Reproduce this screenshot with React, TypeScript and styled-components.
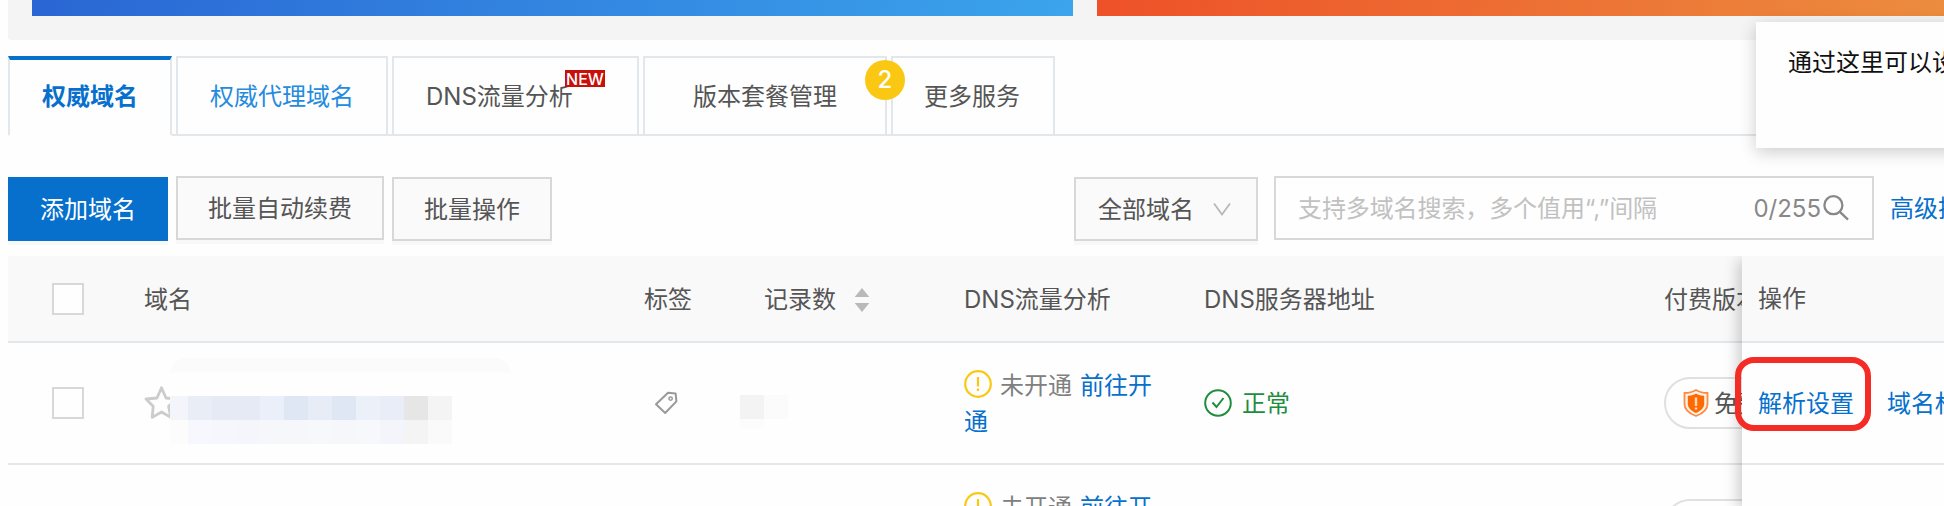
import React from "react";
import styled, { createGlobalStyle, css } from "styled-components";

const line = "#e2e7eb";

const GlobalStyle = createGlobalStyle`
  * { box-sizing: border-box; }
  body {
    margin: 0;
    background: #fefefe;
    overflow: hidden;
    font-family: Inter, "Noto Sans CJK SC", sans-serif;
    font-size: 24px;
    line-height: 36px;
    color: #555;
  }
`;

const Page = styled.main`
  position: relative;
  width: 1944px;
  height: 506px;
  overflow: hidden;
  padding-left: 8px;
`;

const BannerStrip = styled.section`
  display: flex;
  gap: 24px;
  height: 40px;
  padding: 0 0 24px 24px;
  background: #f4f4f4;
  border-bottom-left-radius: 4px;
`;

const Banner = styled.div<{ $from: string; $to: string; $width: number }>`
  flex: 0 0 ${(p) => p.$width}px;
  background: linear-gradient(100deg, ${(p) => p.$from}, ${(p) => p.$to});
`;

const TabBar = styled.nav`
  display: flex;
  gap: 4px;
  height: 80px;
  margin-top: 16px;
  box-shadow: inset 0 -2px 0 ${line};
`;

const Tab = styled.div<{ $width: number; $active?: boolean; $link?: boolean; $indent?: number }>`
  position: relative;
  flex: 0 0 ${(p) => p.$width}px;
  height: 80px;
  padding: 21px 0 0 ${(p) => p.$indent ?? 32}px;
  border: 2px solid ${line};
  white-space: nowrap;
  color: ${(p) => (p.$link ? "#258bdc" : "#555")};
  ${(p) =>
    p.$active &&
    css`
      padding-top: 19px;
      border-top: 4px solid #0670cc;
      border-bottom-color: #fefefe;
      background: #fefefe;
      color: #0670cc;
      font-weight: 600;
    `}
`;

const NewBadge = styled.span`
  position: absolute;
  top: 12px;
  left: 171px;
  width: 40px;
  height: 17px;
  background: #c80f0a;
  color: #fff;
  font-size: 16px;
  font-weight: 500;
  line-height: 18px;
  text-align: center;
`;

const StepBadge = styled.span`
  position: absolute;
  z-index: 2;
  top: 2px;
  right: -20px;
  width: 40px;
  height: 40px;
  border-radius: 50%;
  background: #fac813;
  color: #fff;
  font-weight: 500;
  line-height: 40px;
  text-align: center;
`;

const Toolbar = styled.div`
  display: flex;
  gap: 8px;
  height: 80px;
  margin-top: 40px;
  white-space: nowrap;
`;

const Label = styled.span`
  padding-top: 2px;
`;

const Button = styled.button<{ $width: number; $primary?: boolean; $drop?: number }>`
  display: flex;
  align-items: center;
  justify-content: center;
  flex: 0 0 ${(p) => p.$width}px;
  height: 64px;
  margin: ${(p) => p.$drop ?? 0}px 0 0;
  padding: 0;
  border: 2px solid ${(p) => (p.$primary ? "#0670cc" : "#d8d8d8")};
  background: ${(p) => (p.$primary ? "#0670cc" : "#fafafa")};
  box-shadow: 0 4px 0 rgba(0, 0, 0, 0.025);
  color: ${(p) => (p.$primary ? "#fff" : "#555")};
  font: inherit;
`;

const FilterButton = styled(Button)`
  justify-content: flex-start;
  gap: 19px;
  margin-left: auto;
  padding-left: 22px;
`;

const SearchBox = styled.div`
  display: flex;
  align-items: center;
  flex: 0 0 600px;
  height: 64px;
  margin-left: 8px;
  padding: 0 23px 0 22px;
  border: 2px solid #d8d8d8;
  background: #fefefe;
`;

const Placeholder = styled(Label)`
  flex: 1;
  color: #c1c1c1;
  letter-spacing: -0.1px;
`;

const Counter = styled(Label)`
  margin-right: 2px;
  color: #888;
`;

const Advanced = styled.a`
  flex: 0 0 62px;
  height: 66px;
  padding-left: 8px;
  overflow: hidden;
  line-height: 66px;
  color: #0670cc;
`;

const columns = "136px 500px 120px 200px 240px 460px 1fr";

const Table = styled.section`
  position: relative;
  height: 250px;
  overflow: hidden;
`;

const Row = styled.div<{ $head?: boolean }>`
  display: grid;
  grid-template-columns: ${columns};
  align-items: center;
  height: ${(p) => (p.$head ? 87 : 122)}px;
  border-bottom: 2px solid ${line};
  background: ${(p) => (p.$head ? "#f9f9f9" : "transparent")};
  white-space: nowrap;
`;

const Cell = styled.div`
  display: flex;
  align-items: center;
  min-width: 0;
`;

const HeadCell = styled(Cell)`
  padding-top: 2px;
`;

const Checkbox = styled.span`
  width: 32px;
  height: 32px;
  margin-left: 44px;
  border: 2px solid #d8d8d8;
  background: #fefefe;
`;

const DomainCell = styled(Cell)`
  position: relative;
  height: 120px;
`;

const Masked = styled.div`
  position: absolute;
  left: 26px;
  top: 15px;
  width: 341px;
  height: 86px;
  background: #fefefe;
  border-top: 14px solid #fbfbfb;
  border-radius: 16px 16px 0 0;
  padding-top: 24px;
`;

const MosaicLine = styled.div`
  display: flex;
  height: 24px;
`;

const Block = styled.i<{ $color: string; $width?: number; $height?: number }>`
  flex: 0 0 ${(p) => p.$width ?? 24}px;
  height: ${(p) => p.$height ?? 24}px;
  background: ${(p) => p.$color};
`;

const CountMask = styled.div`
  display: flex;
  height: 34px;
  margin: 17px 0 0 -24px;
`;

const FlowText = styled.div`
  width: 200px;
  padding-top: 2px;
  white-space: normal;
  color: #808080;

  svg { vertical-align: -4px; margin-right: 8px; }
`;

const Link = styled.a`
  color: #0670cc;
`;

const FlowLink = styled(Link)`
  margin-left: 8px;
`;

const Normal = styled(Cell)`
  gap: 10px;
  color: #1e8e3e;
`;

const Plan = styled.div`
  display: flex;
  align-items: center;
  gap: 5px;
  width: 150px;
  height: 52px;
  padding-left: 17px;
  border: 2px solid #e0e0e0;
  border-radius: 26px;
`;

const Fixed = styled.aside`
  position: absolute;
  top: 0;
  right: 0;
  width: 202px;
  height: 250px;
  background: #fefefe;
  box-shadow: -4px 4px 14px rgba(0, 0, 0, 0.2);
`;

const FixedRow = styled.div<{ $head?: boolean }>`
  display: flex;
  align-items: center;
  height: ${(p) => (p.$head ? 87 : 122)}px;
  padding-top: ${(p) => (p.$head ? 1 : 2)}px;
  padding-left: 16px;
  border-bottom: 2px solid ${line};
  background: ${(p) => (p.$head ? "#f9f9f9" : "transparent")};
  white-space: nowrap;
`;

const Divider = styled.i`
  width: 2px;
  height: 20px;
  margin: 0 17px 0 16px;
  background: #e0e0e0;
`;

const Highlight = styled.div`
  position: absolute;
  left: 1735px;
  top: 357px;
  width: 136px;
  height: 74px;
  border: 6px solid #f42c25;
  border-radius: 19px;
`;

const Hint = styled.aside`
  position: absolute;
  left: 1756px;
  top: 22px;
  width: 240px;
  height: 126px;
  padding: 23px 32px;
  background: #fefefe;
  box-shadow: 0 4px 16px rgba(0, 0, 0, 0.2);
  color: #111;
  white-space: nowrap;
`;

const Chevron = () => (
  <svg width="18" height="14" viewBox="0 0 18 14" fill="none" stroke="#b8b8b8" strokeWidth="1.8">
    <path d="M1 1.5 9 12.5 17 1.5" />
  </svg>
);

const SearchIcon = () => (
  <svg width="26" height="26" viewBox="0 0 26 26" fill="none" stroke="#888" strokeWidth="2.3">
    <circle cx="10.4" cy="10.2" r="9" />
    <path d="m16.6 16.6 8.4 8" />
  </svg>
);

const SortSvg = styled.svg`
  margin-left: 18px;
`;

const SortIcon = () => (
  <SortSvg width="16" height="26" viewBox="0 0 16 26" fill="#b9b9b9">
    <path d="M8 1 15.300 10H.7zM8 25 .7 16h14.600z" />
  </SortSvg>
);

const Star = () => (
  <svg width="34" height="34" viewBox="0 0 34 34" fill="none" stroke="#ccc" strokeWidth="2.8" strokeLinejoin="round">
    <path d="M17.500 1.800 22 12l10.400 1-7.800 7.200 2.200 11.200-9.300-5.400-9.300 5.400 1-11.200L2 13l11-1z" />
  </svg>
);

const TagSvg = styled.svg`
  margin-left: 10px;
`;

const TagIcon = () => (
  <TagSvg width="24" height="24" viewBox="0 0 24 24" fill="none" stroke="#999" strokeWidth="2" strokeLinejoin="round">
    <path d="M2 13.200 14 1.800l7.600.6.8 8L11.200 22z" />
    <circle cx="16.600" cy="7.600" r="1.700" strokeWidth="1.500" />
  </TagSvg>
);

const WarnIcon = () => (
  <svg width="28" height="28" viewBox="0 0 28 28" fill="none" stroke="#fac813" strokeWidth="2.2">
    <circle cx="14" cy="14" r="12.8" />
    <path d="M14 7v9.5M14 18.500v2.500" />
  </svg>
);

const OkIcon = () => (
  <svg width="28" height="28" viewBox="0 0 28 28" fill="none" stroke="#1e8e3e" strokeWidth="2">
    <circle cx="14" cy="14" r="12.8" />
    <path d="m8.5 13.500 4 4.500 7-9" />
  </svg>
);

const Shield = () => (
  <svg width="26" height="28" viewBox="0 0 26 28">
    <path d="M13 1C9.5 3.2 5.5 4 1.5 4v11c0 6 5 9.7 11.500 12 6.500-2.300 11.500-6 11.500-12V4C20.500 4 16.500 3.200 13 1z" fill="#fff3ea" stroke="#ff8a45" strokeWidth="1.8" />
    <path d="M13 4.500C10.500 6 8 6.600 4.800 6.800v8c0 4.400 3.500 7.200 8.200 9.200 4.700-2 8.200-4.800 8.200-9.200v-8C18 6.600 15.500 6 13 4.500z" fill="#ff6a00" />
    <path d="M13 8.500v8.500M13 18.500v2" stroke="#ffd9bd" strokeWidth="2.400" />
  </svg>
);

const mosaic = [
  ["#f4f5fa", "#e8edf6", "#e5eaf5", "#e5eaf5", "#ebeff9", "#e0e7f4", "#e8ecf6", "#e0e7f4", "#ecf0f9", "#e9edf8", "#e6e6e6", "#f4f4f4"],
  ["#fcfcfc", "#f6f8fd", "#f5f7fc", "#f4f6fb", "#f5f7fb", "#f5f7fb", "#f6f8fc", "#f5f7fb", "#f6f8fc", "#f3f5fb", "#f4f4f4", "#fafafa"],
];

const DomainRow = ({ masked }: { masked?: boolean }) => (
  <Row>
    <Cell><Checkbox /></Cell>
    <DomainCell>
      <Star />
      {masked && (
        <Masked>
          {mosaic.map((colors, i) => (
            <MosaicLine key={i}>
              {colors.map((c, j) => <Block key={j} $color={c} $width={j ? 24 : 18} />)}
            </MosaicLine>
          ))}
        </Masked>
      )}
    </DomainCell>
    <Cell><TagIcon /></Cell>
    <Cell>
      {masked && (
        <CountMask>
          <Block $color="linear-gradient(#f3f3f3 24px, #fcfcfc 24px)" $height={34} />
          <Block $color="#fbfbfb" />
        </CountMask>
      )}
    </Cell>
    <Cell>
      <FlowText><WarnIcon />未开通<FlowLink>前往开通</FlowLink></FlowText>
    </Cell>
    <Normal><OkIcon /><Label>正常</Label></Normal>
    <Cell><Plan><Shield /><Label>免费版</Label></Plan></Cell>
  </Row>
);

export default function App() {
  return (
    <Page>
      <GlobalStyle />
      <BannerStrip>
        <Banner $width={1041} $from="#2a66d4" $to="#3ba4ec" />
        <Banner $width={1041} $from="#ee5128" $to="#eb9a44" />
      </BannerStrip>

      <TabBar>
        <Tab $width={164} $active>权威域名</Tab>
        <Tab $width={212} $link>权威代理域名</Tab>
        <Tab $width={247}>DNS流量分析<NewBadge>NEW</NewBadge></Tab>
        <Tab $width={244} $indent={48}>版本套餐管理<StepBadge>2</StepBadge></Tab>
        <Tab $width={164} $indent={31}>更多服务</Tab>
      </TabBar>

      <Toolbar>
        <Button $width={160} $primary $drop={1}><Label>添加域名</Label></Button>
        <Button $width={208}><Label>批量自动续费</Label></Button>
        <Button $width={160} $drop={1}><Label>批量操作</Label></Button>
        <FilterButton $width={184} $drop={1}><Label>全部域名</Label><Chevron /></FilterButton>
        <SearchBox>
          <Placeholder>支持多域名搜索，多个值用“,”间隔</Placeholder>
          <Counter>0/255</Counter>
          <SearchIcon />
        </SearchBox>
        <Advanced>高级搜索</Advanced>
      </Toolbar>

      <Table>
        <Row $head>
          <Cell><Checkbox /></Cell>
          <HeadCell>域名</HeadCell>
          <HeadCell>标签</HeadCell>
          <HeadCell>记录数<SortIcon /></HeadCell>
          <HeadCell>DNS流量分析</HeadCell>
          <HeadCell>DNS服务器地址</HeadCell>
          <HeadCell>付费版本</HeadCell>
        </Row>
        <DomainRow masked />
        <DomainRow />
        <Fixed>
          <FixedRow $head>操作</FixedRow>
          <FixedRow><Link>解析设置</Link><Divider /><Link>域名权限</Link></FixedRow>
          <FixedRow />
        </Fixed>
      </Table>

      <Hint>通过这里可以设置</Hint>
      <Highlight />
    </Page>
  );
}
